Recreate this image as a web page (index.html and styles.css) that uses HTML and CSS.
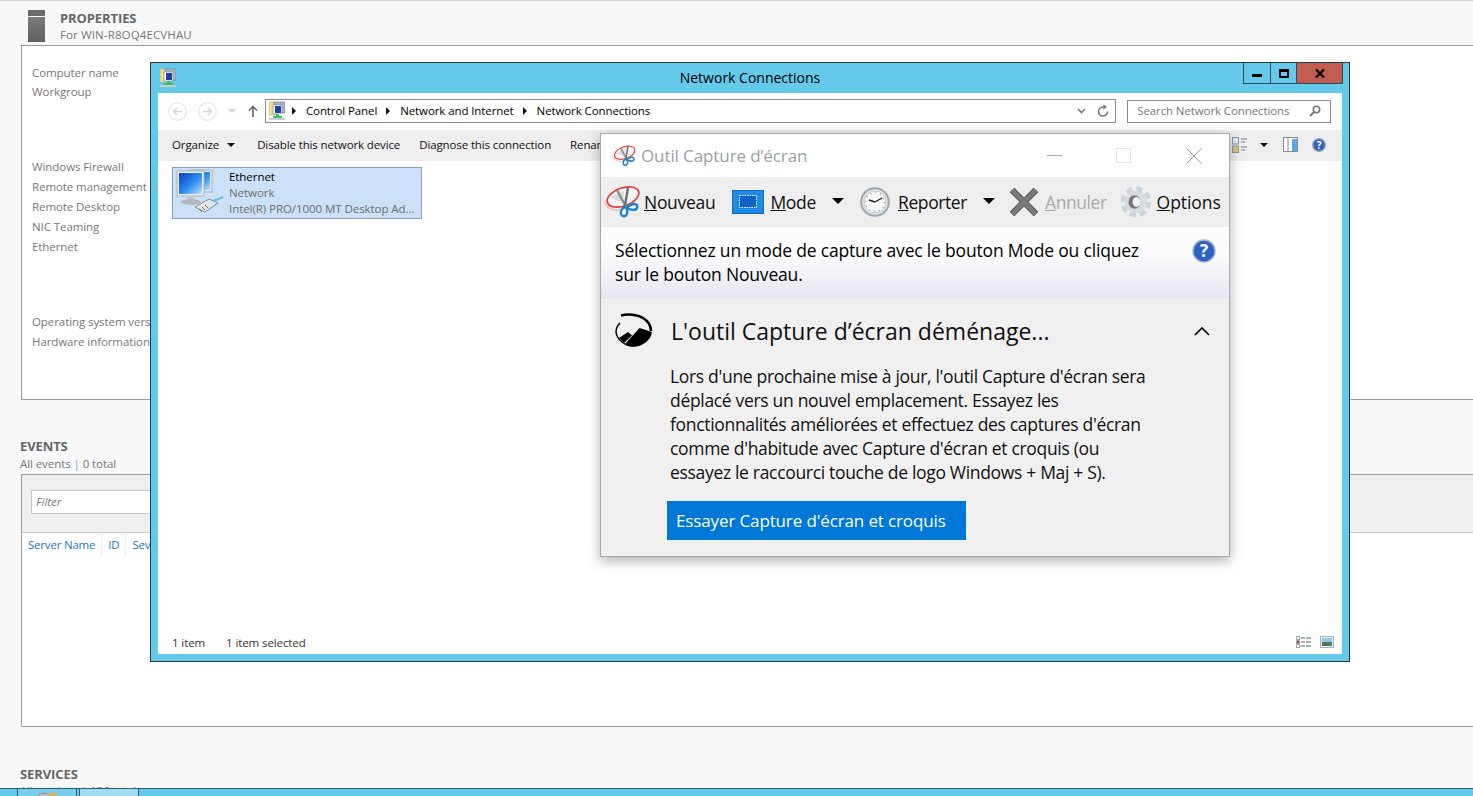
FILE: index.html
```html
<!DOCTYPE html>
<html lang="fr">
<head>
  <meta charset="UTF-8">
  <meta name="viewport" content="width=device-width, initial-scale=1.0">
  <title>Server Manager</title>
  <link rel="stylesheet" href="styles.css">
</head>
<body>
  <svg class="defs" width="0" height="0">
    <defs>
      <linearGradient id="screen-blue" x1="0" y1="0" x2="1" y2="1">
        <stop offset="0" stop-color="#0a3fd0"/>
        <stop offset=".55" stop-color="#2f8df0"/>
        <stop offset="1" stop-color="#bfe4fa"/>
      </linearGradient>
      <linearGradient id="tower-grey" x1="0" y1="0" x2="0" y2="1">
        <stop offset="0" stop-color="#7c7c7c"/>
        <stop offset="1" stop-color="#5f5f5f"/>
      </linearGradient>
      <symbol id="net-icon" viewBox="0 0 16 20">
        <path d="M0 1h7l2 2v11H0z" fill="#f2dc8c" stroke="#c9ad5a" stroke-width=".6"/>
        <rect x="5" y="1" width="11" height="11" fill="#a9b4c4" stroke="#6d7a8c" stroke-width=".6"/>
        <rect x="4" y="4" width="9" height="9" fill="#fff" stroke="#6d7a8c" stroke-width=".6"/>
        <rect x="6" y="5" width="6" height="7" fill="#1c3fa8"/>
        <rect x="7" y="13" width="3" height="3" fill="#3fbf5f"/>
        <rect x="4" y="15" width="9" height="3" fill="#3fbf5f"/>
        <rect x="0" y="17" width="16" height="2" fill="#c6ccd2"/>
      </symbol>
      <symbol id="scissors" viewBox="0 0 40 40">
        <path d="M3 19c-1 4 3 8 9 9 3 .5 6 .3 9-.5" fill="none" stroke="#f4b4b0" stroke-width="1.300"/>
        <ellipse cx="21" cy="15" rx="16.500" ry="9" fill="#f6f6f6" stroke="#e5393a" stroke-width="1.700" transform="rotate(-20 21 15)"/>
        <path d="M8 15l14-6-1 12z" fill="#dcdcdc"/>
        <path d="M15 8l9.500 18" stroke="#8c8c8c" stroke-width="2.400"/>
        <path d="M26 6l-3.500 20" stroke="#6f6f6f" stroke-width="2.400"/>
        <path d="M23 25c-3 1-4.500 4-4 7 .5 2 3 3 5 1.500 2-2 1.500-6 0-8.500z" fill="none" stroke="#1d86c8" stroke-width="2.400"/>
        <path d="M25 25c2-1 5-3 7-3 3 0 4 2 3 4-1 2.500-6 2.500-10 0z" fill="none" stroke="#1d86c8" stroke-width="2.400"/>
      </symbol>
    </defs>
  </svg>

  <div class="manager">
    <header class="props-head">
      <svg class="tower" width="17" height="32" viewBox="0 0 17 32">
        <rect width="17" height="6" fill="#6b6b6b"/>
        <rect y="7" width="17" height="25" fill="url(#tower-grey)"/>
      </svg>
      <div>
        <div class="sec-title">PROPERTIES</div>
        <div class="sec-sub">For WIN-R8OQ4ECVHAU</div>
      </div>
    </header>
    <section class="props-panel">
      <ul class="prop-list prop-list-first">
        <li>Computer name</li>
        <li>Workgroup</li>
      </ul>
      <ul class="prop-list prop-list-wide">
        <li>Windows Firewall</li>
        <li>Remote management</li>
        <li>Remote Desktop</li>
        <li>NIC Teaming</li>
        <li>Ethernet</li>
      </ul>
      <ul class="prop-list prop-list-wide">
        <li>Operating system version</li>
        <li>Hardware information</li>
      </ul>
    </section>

    <div class="sec-head events-head">
      <div class="sec-title">EVENTS</div>
      <div class="sec-sub">All events <span class="pipe">|</span> 0 total</div>
    </div>
    <section class="events-panel">
      <div class="filter-bar">
        <div class="filter-box">Filter</div>
      </div>
      <div class="col-heads">
        <span class="col col-name">Server Name</span>
        <span class="col col-id">ID</span>
        <span class="col">Severity</span>
      </div>
    </section>

    <div class="sec-head services-head">
      <div class="sec-title">SERVICES</div>
      <div class="sec-sub">All services | 136 total</div>
    </div>
  </div>

  <div class="taskbar">
    <span class="task-btn">
      <svg width="20" height="6" viewBox="0 0 20 6"><path d="M0 6c0-4 4-5 7-5s6 1 6 5z" fill="#b8b8b8" stroke="#777" stroke-width=".6"/><rect x="11" y="1" width="9" height="5" fill="#d9b45a"/></svg>
    </span>
    <span class="task-btn task-active"></span>
  </div>

  <!-- Network Connections window -->
  <div class="net-win">
    <div class="net-title">
      <svg class="net-title-icon" width="16" height="20"><use href="#net-icon"/></svg>
      <span class="net-title-text">Network Connections</span>
      <div class="caption-btns">
        <span class="cap cap-min"><i></i></span>
        <span class="cap cap-max"><i></i></span>
        <span class="cap cap-close">
          <svg width="10" height="9" viewBox="0 0 10 9"><path d="M1 .5l8 8M9 .5l-8 8" stroke="#000" stroke-width="2.200" fill="none"/></svg>
        </span>
      </div>
    </div>
    <div class="net-body">
      <div class="address-row">
        <svg class="nav-circle" width="19" height="19" viewBox="0 0 19 19"><circle cx="9.500" cy="9.500" r="8.800" fill="none" stroke="#dedede"/><path d="M14 9.500H6M9 6L5.500 9.500 9 13" fill="none" stroke="#d4d4d4" stroke-width="1.400"/></svg>
        <svg class="nav-circle" width="19" height="19" viewBox="0 0 19 19"><circle cx="9.500" cy="9.500" r="8.800" fill="none" stroke="#dedede"/><path d="M5 9.500h8M10 6l3.500 3.500L10 13" fill="none" stroke="#d4d4d4" stroke-width="1.400"/></svg>
        <span class="nav-drop"></span>
        <svg class="nav-up" width="10" height="12" viewBox="0 0 10 12"><path d="M5 12V1.500M1 5.500l4-4 4 4" fill="none" stroke="#6d6d6d" stroke-width="1.700"/></svg>
        <div class="address-box">
          <svg width="16" height="20"><use href="#net-icon"/></svg>
          <span class="crumb-arrow"></span><span class="crumb">Control Panel</span>
          <span class="crumb-arrow"></span><span class="crumb">Network and Internet</span>
          <span class="crumb-arrow"></span><span class="crumb">Network Connections</span>
          <span class="address-tools">
            <svg width="9" height="6" viewBox="0 0 9 6"><path d="M1 1l3.500 3.500L8 1" fill="none" stroke="#777" stroke-width="1.600"/></svg>
            <svg width="12" height="13" viewBox="0 0 12 13"><path d="M10.500 7.500A4.500 4.500 0 1 1 6 3h2" fill="none" stroke="#777" stroke-width="1.500"/><path d="M6.500 .2L10 3 6.500 5.500z" fill="#777"/></svg>
          </span>
        </div>
        <div class="search-box">
          <span>Search Network Connections</span>
          <svg width="12" height="12" viewBox="0 0 12 12"><circle cx="7.500" cy="4.500" r="3.200" fill="none" stroke="#777" stroke-width="1.500"/><path d="M5 7l-4 4" stroke="#777" stroke-width="2"/></svg>
        </div>
      </div>
      <div class="net-toolbar">
        <span class="tool">Organize</span><span class="drop-arrow organize-arrow"></span>
        <span class="tool">Disable this network device</span>
        <span class="tool">Diagnose this connection</span>
        <span class="tool">Rename this connection</span>
        <span class="net-tools-right">
          <svg width="16" height="16" viewBox="0 0 16 16"><rect x=".5" y=".5" width="6" height="6.500" fill="#dfeaf2" stroke="#8a9bb0"/><rect x=".5" y="9" width="6" height="6.500" fill="#e6c36a" stroke="#8a9bb0"/><path d="M9 2h6M9 5h4M9 10h6M9 13h4" stroke="#777"/></svg>
          <span class="drop-arrow"></span>
          <svg width="15" height="15" viewBox="0 0 15 15"><rect x=".5" y=".5" width="14" height="14" fill="#fff" stroke="#8a8a8a"/><rect x="9" y="2" width="5" height="12" fill="#5da8e8"/><path d="M5 1v13" stroke="#8a8a8a"/></svg>
          <svg width="14" height="14" viewBox="0 0 14 14"><circle cx="7" cy="7" r="6.300" fill="#2f62c4" stroke="#9aa4b2" stroke-width="1.200"/><text x="7" y="10.500" class="help-glyph">?</text></svg>
        </span>
      </div>
      <div class="files">
        <div class="file-item">
          <svg class="file-icon" width="50" height="50" viewBox="0 0 50 50">
            <rect x="14" y="2" width="23" height="22" fill="#dfe7ef" stroke="#a9b5c0"/>
            <rect x="16" y="4" width="19" height="18" fill="url(#screen-blue)"/>
            <rect x="2" y="3" width="27" height="25" fill="#eef1f4" stroke="#a5b0ba"/>
            <rect x="4" y="5" width="23" height="21" fill="url(#screen-blue)"/>
            <path d="M13 28h6l1 5h-8z" fill="#c4c8cc"/>
            <ellipse cx="16" cy="34" rx="10" ry="3" fill="#b4b8bc"/>
            <path d="M20 39l14-8 9 4-13 9z" fill="#e2e5e8" stroke="#6f7880" stroke-width=".8"/>
            <path d="M24 41l3 3M27 39l3 3M30 37l3 3" stroke="#8a6f2e" stroke-width="1"/>
            <path d="M38 33l10-4" stroke="#5cc4e4" stroke-width="2.400"/>
          </svg>
          <div class="file-text">
            <div class="file-name">Ethernet</div>
            <div class="file-meta">Network</div>
            <div class="file-meta">Intel(R) PRO/1000 MT Desktop Ad...</div>
          </div>
        </div>
      </div>
      <div class="statusbar">
        <span>1 item</span>
        <span>1 item selected</span>
        <span class="status-views">
          <svg width="15" height="13" viewBox="0 0 15 13"><rect x=".5" y=".5" width="3" height="3" fill="#fff" stroke="#9aa"/><rect x=".5" y="4.500" width="3" height="3" fill="#c33" stroke="#9aa"/><rect x=".5" y="8.500" width="3" height="3" fill="#fff" stroke="#9aa"/><path d="M5 2h4M10 2h5M5 6h4M10 6h5M5 10h4M10 10h5" stroke="#566"/></svg>
          <svg width="14" height="12" viewBox="0 0 14 12"><rect x=".5" y=".5" width="13" height="11" fill="#eef2f6" stroke="#a8b0ba"/><rect x="2" y="2" width="10" height="4" fill="#8cc8ee"/><rect x="2" y="6" width="10" height="4" fill="#4f7a5c"/></svg>
        </span>
      </div>
    </div>
  </div>

  <!-- Snipping tool window -->
  <div class="snip-win">
    <div class="snip-title">
      <svg width="26" height="26"><use href="#scissors"/></svg>
      <span class="snip-title-text">Outil Capture d’écran</span>
      <span class="snip-caps">
        <svg width="15" height="15" viewBox="0 0 15 15"><path d="M0 7.500h15" stroke="#a8a8a8"/></svg>
        <svg width="15" height="15" viewBox="0 0 15 15"><rect x=".5" y=".5" width="14" height="14" fill="none" stroke="#e4e4e4"/></svg>
        <svg class="snip-x" width="16" height="16" viewBox="0 0 16 16"><path d="M.5.5l15 15M15.500.5l-15 15" stroke="#9a9a9a" fill="none"/></svg>
      </span>
    </div>
    <div class="snip-toolbar">
      <span class="snip-tool snip-new">
        <svg width="40" height="40"><use href="#scissors"/></svg>
        <span><u>N</u>ouveau</span>
      </span>
      <span class="snip-tool snip-mode">
        <svg width="32" height="24" viewBox="0 0 32 24"><rect x=".5" y=".5" width="31" height="23" fill="#1f8be8" stroke="#0f6cc0"/><rect x="7.500" y="5.500" width="17" height="12" fill="#0f63c8" stroke="#fff" stroke-dasharray="1.500 1"/></svg>
        <span><u>M</u>ode</span>
        <span class="snip-arrow"></span>
      </span>
      <span class="snip-tool snip-delay">
        <svg width="30" height="32" viewBox="0 0 30 32">
          <circle cx="15" cy="16" r="13.800" fill="#e4e8ea" stroke="#9ea5aa" stroke-width="2"/>
          <circle cx="15" cy="16" r="11" fill="#f8f8f8" stroke="#c4cace"/>
          <circle cx="15" cy="16" r="9.500" fill="none" stroke="#999" stroke-width="1.500" stroke-dasharray="1 3.970"/>
          <path d="M15 16l7-4M15 16l-6-2" stroke="#222" stroke-width="1.400" fill="none"/>
        </svg>
        <span><u>R</u>eporter</span>
        <span class="snip-arrow"></span>
      </span>
      <span class="snip-tool snip-cancel">
        <svg width="30" height="30" viewBox="0 0 30 30"><path d="M3 3l24 24M27 3L3 27" stroke="#555" stroke-width="6.500" fill="none"/><path d="M3 3l24 24M27 3L3 27" stroke="#7a7a7a" stroke-width="4.500" fill="none"/></svg>
        <span class="snip-disabled"><u>A</u>nnuler</span>
      </span>
      <span class="snip-tool snip-options">
        <svg width="30" height="34" viewBox="0 0 30 34">
          <circle cx="15" cy="17" r="13" fill="none" stroke="#ccd3d9" stroke-width="5" stroke-dasharray="6.200 4"/>
          <circle cx="15" cy="17" r="11" fill="#d6dce1"/>
          <ellipse cx="13.500" cy="17" rx="6" ry="6.800" fill="#757575"/>
          <ellipse cx="15.500" cy="17" rx="4" ry="5" fill="#f0f0f0"/>
        </svg>
        <span><u>O</u>ptions</span>
      </span>
    </div>
    <div class="snip-message">
      <p>Sélectionnez un mode de capture avec le bouton Mode ou cliquez sur le bouton Nouveau.</p>
      <svg class="snip-help" width="24" height="24" viewBox="0 0 24 24"><circle cx="12" cy="12" r="11" fill="#2f62c4" stroke="#a9b4c8" stroke-width="1.500"/><text x="12" y="18" class="help-glyph-big">?</text></svg>
    </div>
    <div class="snip-notice">
      <div class="notice-head">
        <svg width="38" height="36" viewBox="0 0 38 36">
          <path d="M6 2.500C12 1 22 1 28 5c5 3 8 8 8 13" fill="none" stroke="#000" stroke-width="2.600"/>
          <path d="M5 10C2 13 1 16 1 19c1 8 9 14 17 14 3 0 6-.7 9-2" fill="none" stroke="#000" stroke-width="1.500"/>
          <path d="M10 31l14.500-16L37 19c-1 8-9 14.500-19 14.500-3 0-6-1-8-2.500z" fill="#000"/>
          <path d="M4 25l9-6 4 3.500L9 30z" fill="#000"/>
        </svg>
        <h2>L'outil Capture d’écran déménage...</h2>
        <svg class="notice-chevron" width="16" height="9" viewBox="0 0 16 9"><path d="M1 8l7-7 7 7" fill="none" stroke="#000" stroke-width="1.700"/></svg>
      </div>
      <p class="notice-text">Lors d'une prochaine mise à jour, l'outil Capture d'écran sera déplacé vers un nouvel emplacement. Essayez les fonctionnalités améliorées et effectuez des captures d'écran comme d'habitude avec Capture d'écran et croquis (ou essayez le raccourci touche de logo Windows + Maj + S).</p>
      <button class="notice-btn">Essayer Capture d'écran et croquis</button>
    </div>
  </div>
</body>
</html>
```

FILE: styles.css
```css
* {
  box-sizing: border-box;
}
body {
  margin: 0;
  height: 796px;
  overflow: hidden;
  position: relative;
  background-color: #f8f8f8;
  border-top: 1px solid #d0d0d0;
  font-family: "Open Sans", "Noto Sans", sans-serif;
  font-size: 12px;
  color: #000;
}
.defs {
  position: absolute;
}
ul {
  list-style: none;
  margin: 0;
  padding: 0;
}

/* server manager behind the windows */
.manager {
  padding-left: 20px;
}
.props-head {
  display: flex;
  gap: 15px;
  padding: 9px 0 0 8px;
  height: 44px;
}
.props-head .sec-sub {
  letter-spacing: 0.12px;
}
.sec-title {
  font-size: 13px;
  line-height: 16px;
  font-weight: 700;
  color: #666;
  letter-spacing: -0.1px;
}
.sec-sub {
  font-size: 11.5px;
  line-height: 18px;
  color: #777;
  letter-spacing: -0.08px;
}
.pipe {
  color: #7aa7d8;
}
.props-panel {
  margin-left: 1px;
  height: 355px;
  background: #fff;
  border: 1px solid #9a9a9a;
  border-right: 0;
  padding: 17px 0 0 10px;
  color: #777;
  font-size: 11.5px;
  letter-spacing: -0.08px;
}
.prop-list li {
  line-height: 20px;
}
.prop-list-first li {
  line-height: 19px;
}
.prop-list-wide {
  margin-top: 55px;
}
.prop-list-first + .prop-list-wide {
  margin-top: 56px;
}
.sec-head {
  padding-top: 38px;
}
.events-head .sec-sub {
  margin-top: 1px;
}
.events-panel {
  margin-left: 1px;
  margin-top: 1px;
  height: 253px;
  background: #fff;
  border: 1px solid #9a9a9a;
  border-right: 0;
}
.filter-bar {
  height: 58px;
  padding: 15px 9px 0;
  background: #efefef;
  border-bottom: 1px solid #c8c8c8;
}
.filter-box {
  width: 300px;
  height: 24px;
  background: #fff;
  border: 1px solid #c8c8c8;
  padding-left: 4px;
  line-height: 22px;
  font-style: italic;
  color: #777;
  font-size: 11.5px;
}
.col-heads {
  display: flex;
  height: 23px;
  color: #1a7ac4;
  font-size: 11.5px;
  letter-spacing: -0.2px;
  line-height: 23px;
}
.col {
  padding: 0 6px;
  border-right: 1px solid #eee;
}
.services-head {
  padding-top: 39px;
}
.taskbar {
  position: absolute;
  left: 0;
  right: 0;
  bottom: 0;
  height: 8px;
  background: #65c9ea;
  border-top: 1px solid #2f5a6c;
  display: flex;
  padding-left: 17px;
  gap: 2px;
}
.task-btn {
  width: 60px;
  border-left: 1px solid #2f5a6c;
  border-right: 1px solid #2f5a6c;
  background: #76cfec;
  display: flex;
  justify-content: center;
  overflow: hidden;
  padding-top: 3px;
}
.task-active {
  background: #a0dcf2;
}

/* network connections */
.net-win {
  position: absolute;
  left: 150px;
  top: 61px;
  width: 1200px;
  height: 600px;
  background: #65c9ea;
  border: 1px solid #2b3a42;
  padding: 0 7px 7px;
  display: flex;
  flex-direction: column;
}
.net-title {
  height: 30px;
  display: flex;
  align-items: center;
  position: relative;
  font-size: 14px;
}
.net-title-icon {
  margin-left: 2px;
}
.net-title-text {
  flex: 1;
  text-align: center;
  padding-right: 18px;
  padding-bottom: 1px;
}
.caption-btns {
  position: absolute;
  right: -1px;
  top: 0;
  display: flex;
  height: 21px;
  border: 1px solid #2b4a5a;
  border-top: 0;
}
.cap {
  display: flex;
  align-items: center;
  justify-content: center;
  width: 27px;
  border-right: 1px solid #2b4a5a;
}
.cap-min i {
  display: block;
  width: 10px;
  height: 3px;
  margin-top: 5px;
  background: #000;
}
.cap-max {
  width: 26px;
}
.cap-max i {
  display: block;
  width: 10px;
  height: 9px;
  border: 2px solid #000;
  border-top-width: 3px;
}
.cap-close {
  width: 45px;
  background: #c25b50;
  border-right: 0;
}
.net-body {
  flex: 1;
  background: #fff;
  display: flex;
  flex-direction: column;
  min-height: 0;
}
.address-row {
  height: 37px;
  display: flex;
  align-items: center;
  padding: 0 11px 1px 10px;
}
.nav-circle {
  margin-right: 11px;
}
.nav-drop {
  width: 0;
  height: 0;
  border-left: 4px solid transparent;
  border-right: 4px solid transparent;
  border-top: 4px solid #d4d4d4;
  margin-right: 12px;
}
.nav-up {
  margin-right: 7px;
}
.address-box {
  width: 852px;
  height: 24px;
  border: 1px solid #8a8a8a;
  display: flex;
  align-items: center;
  padding: 0 0 1px 3px;
  font-size: 11.5px;
  letter-spacing: -0.1px;
}
.crumb-arrow {
  width: 0;
  height: 0;
  margin: 1px 10px 0 9px;
  border-top: 4px solid transparent;
  border-bottom: 4px solid transparent;
  border-left: 4px solid #111;
}
.address-box svg + .crumb-arrow {
  margin-left: 7px;
}
.address-tools {
  margin-left: auto;
  display: flex;
  align-items: center;
  gap: 11px;
  padding-right: 6px;
}
.search-box {
  margin-left: 11px;
  width: 204px;
  height: 23px;
  border: 1px solid #8a8a8a;
  display: flex;
  align-items: center;
  justify-content: space-between;
  padding: 0 9px 1px;
  color: #777;
  font-size: 11.5px;
  letter-spacing: -0.1px;
}
.net-toolbar {
  height: 31px;
  background: #eee;
  display: flex;
  align-items: center;
  padding: 0 0 2px 14px;
  font-size: 11.5px;
  letter-spacing: -0.12px;
  color: #111;
}
.tool {
  margin-right: 19px;
}
.tool:first-child {
  margin-right: 8px;
}
.drop-arrow {
  width: 0;
  height: 0;
  border-left: 4px solid transparent;
  border-right: 4px solid transparent;
  border-top: 4px solid #111;
  margin-right: 22px;
}
.net-tools-right {
  margin-left: auto;
  display: flex;
  align-items: center;
  padding-right: 16px;
}
.net-tools-right svg {
  margin-right: 14px;
}
.net-tools-right svg:first-child {
  margin-right: 12px;
}
.net-tools-right .drop-arrow {
  margin-right: 15px;
}
.net-tools-right svg:last-child {
  margin-right: 0;
}
.help-glyph {
  font-size: 10px;
  font-weight: 700;
  fill: #fff;
  text-anchor: middle;
}
.help-glyph-big {
  font-size: 17px;
  font-weight: 700;
  fill: #fff;
  text-anchor: middle;
}
.files {
  flex: 1;
  padding: 6px 0 0 14px;
}
.file-item {
  width: 250px;
  height: 52px;
  display: flex;
  background: #cce0f8;
  border: 1px solid #7da2ce;
}
.file-icon {
  margin: 0 4px 0 2px;
  flex: none;
}
.file-text {
  font-size: 11.5px;
  line-height: 16px;
  letter-spacing: -0.06px;
  white-space: nowrap;
  padding-top: 1px;
}
.file-meta {
  color: #6d6d6d;
}
.statusbar {
  height: 24px;
  display: flex;
  align-items: center;
  padding: 0 8px 0 14px;
  gap: 21px;
  font-size: 11.5px;
  letter-spacing: -0.1px;
  color: #333;
}
.status-views {
  margin-left: auto;
  display: flex;
  align-items: center;
  gap: 9px;
}

/* snipping tool */
.snip-win {
  position: absolute;
  left: 600px;
  top: 132px;
  width: 630px;
  height: 424px;
  background: #f0f0f0;
  border: 1px solid #a8a8a8;
  box-shadow: 0 4px 12px rgba(0,0,0,0.3);
  display: flex;
  flex-direction: column;
}
.snip-title {
  height: 43px;
  background: #fff;
  display: flex;
  align-items: center;
  padding-left: 10px;
  flex: none;
}
.snip-title-text {
  margin-left: 4px;
  font-size: 17px;
  color: #9aa0a6;
  letter-spacing: -0.1px;
}
.snip-caps {
  margin-left: auto;
  display: flex;
  align-items: center;
  gap: 54px;
  padding-right: 27px;
}
.snip-x {
  margin-left: 1px;
}
.snip-toolbar {
  height: 50px;
  background: #eee;
  display: flex;
  align-items: center;
  flex: none;
  font-size: 17.5px;
  letter-spacing: -0.3px;
  color: #111;
}
.snip-tool {
  display: flex;
  align-items: center;
  white-space: nowrap;
}
.snip-new {
  margin-left: 1px;
  gap: 2px;
}
.snip-mode {
  margin-left: 17px;
  gap: 6px;
}
.snip-delay {
  gap: 8px;
}
.snip-delay > span:not(.snip-arrow) {
  letter-spacing: -0.4px;
}
.snip-cancel {
  gap: 6px;
}
.snip-options {
  gap: 6px;
}
.snip-options > span {
  letter-spacing: -0.05px;
}
.snip-arrow {
  width: 0;
  height: 0;
  border-left: 6px solid transparent;
  border-right: 6px solid transparent;
  border-top: 6px solid #000;
  margin: -2px 16px 0 10px;
}
.snip-delay .snip-arrow {
  margin: -2px 14px 0 8px;
}
.snip-disabled {
  color: #a8a8a8;
  letter-spacing: -0.45px;
  margin-right: 14px;
}
.snip-message {
  height: 72px;
  flex: none;
  display: flex;
  padding: 11px 13px 0 14px;
  background: linear-gradient(#fdfdfd, #fcfcfd 35%, #e6e6f0);
}
.snip-message p {
  margin: 0;
  width: 540px;
  font-size: 17.5px;
  line-height: 24px;
  letter-spacing: -0.185px;
}
.snip-help {
  margin-left: auto;
  margin-top: 1px;
}
.snip-notice {
  flex: 1;
  padding: 14px 0 0 14px;
}
.notice-head {
  display: flex;
  align-items: center;
  height: 36px;
}
.notice-head h2 {
  margin: 0 0 0 18px;
  font-size: 23px;
  font-weight: 400;
  letter-spacing: 0;
  color: #111;
}
.notice-chevron {
  margin-left: auto;
  margin-right: 19px;
}
.notice-text {
  margin: 15px 0 0 55px;
  width: 490px;
  font-size: 17.5px;
  line-height: 24px;
  letter-spacing: -0.32px;
  color: #111;
}
.notice-btn {
  display: block;
  margin: 17px 0 0 52px;
  width: 299px;
  height: 39px;
  background-color: #0078d7;
  border: none;
  color: #fff;
  font-family: inherit;
  font-size: 17px;
  letter-spacing: -0.13px;
  text-align: left;
  padding: 0 0 0 9px;
}
```
